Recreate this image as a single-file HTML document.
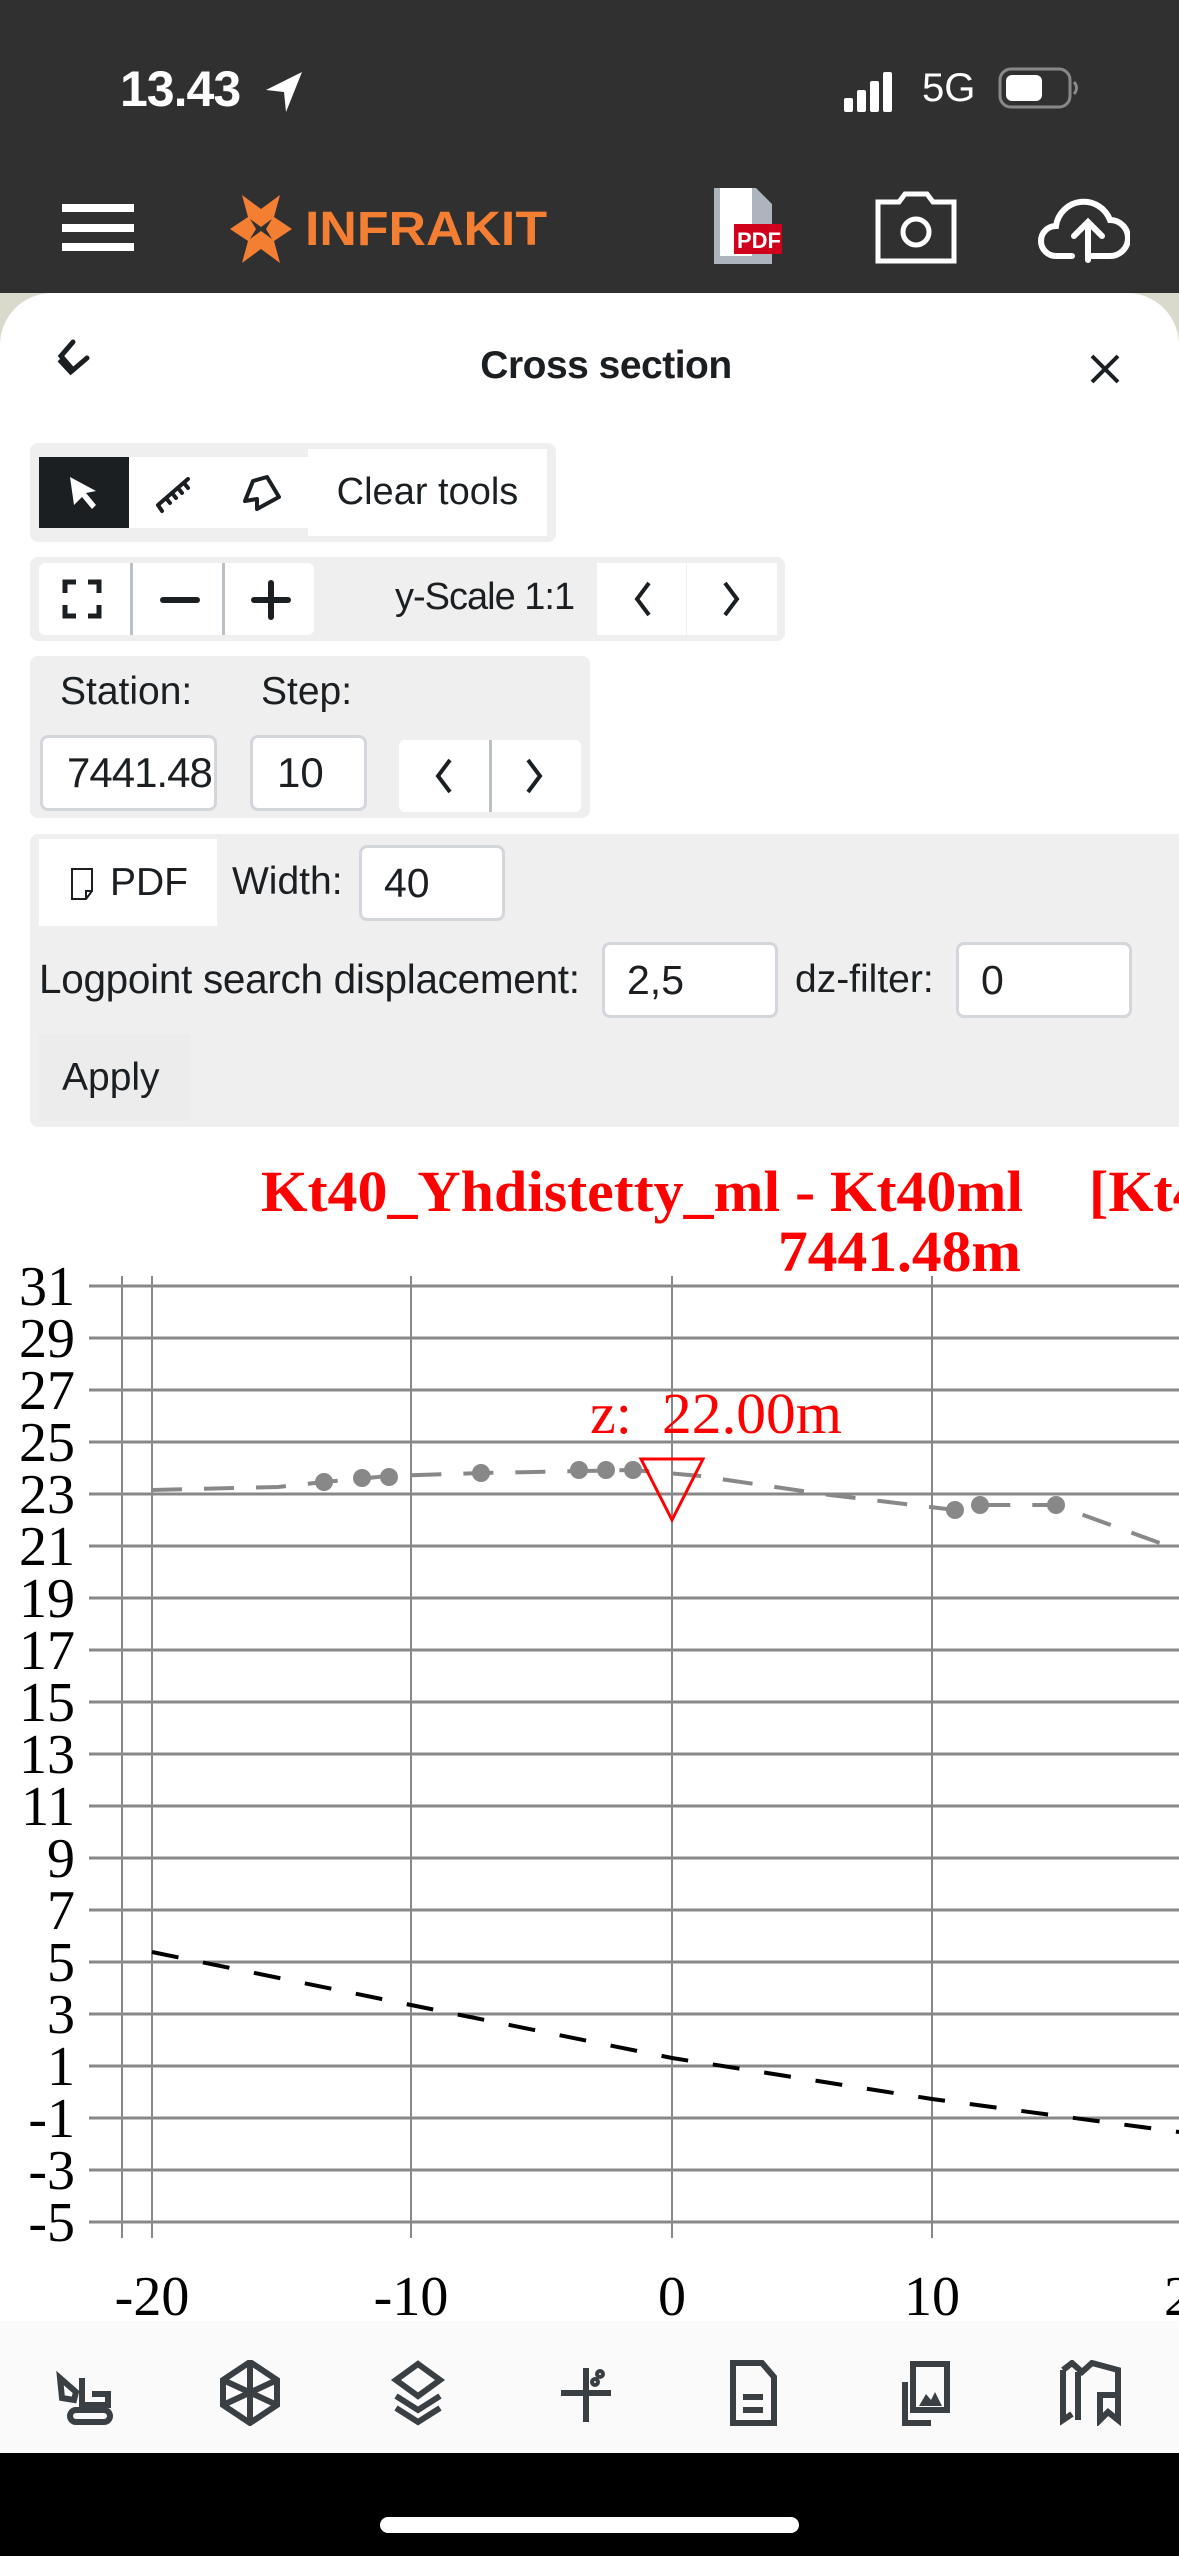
<!DOCTYPE html>
<html><head><meta charset="utf-8">
<style>
*{margin:0;padding:0;box-sizing:border-box}
html,body{width:1179px;height:2556px;overflow:hidden;background:#fff;font-family:"Liberation Sans",sans-serif;color:#1b1f22}
.a{position:absolute}
.grp{position:absolute;background:#efefef;border-radius:8px}
.btn{position:absolute;background:#fff;display:flex;align-items:center;justify-content:center}
.inp{position:absolute;background:#fff;border:3px solid #d3d6da;border-radius:8px;font-size:39px;padding-left:22px;display:flex;align-items:center;overflow:hidden;white-space:nowrap}
.t{position:absolute;font-size:38px;white-space:nowrap}
</style></head><body>
<!-- header -->
<div class="a" style="left:0;top:0;width:1179px;height:293px;background:#303030"></div>
<div class="t" style="left:120px;top:60px;font-size:50px;color:#fff;font-weight:bold;letter-spacing:-1px">13.43</div>
<svg class="a" style="left:262px;top:68px" width="44" height="46" viewBox="0 0 44 46"><path d="M40 4 L4 22 L22 24 L24 44 Z" fill="#fff"/></svg>
<svg class="a" style="left:844px;top:70px" width="60" height="42"><rect x="0" y="28" width="9" height="14" rx="2" fill="#fff"/><rect x="13" y="20" width="9" height="22" rx="2" fill="#fff"/><rect x="26" y="11" width="9" height="31" rx="2" fill="#fff"/><rect x="39" y="2" width="9" height="40" rx="2" fill="#fff"/></svg>
<div class="t" style="left:922px;top:66px;font-size:40px;color:#fff">5G</div>
<svg class="a" style="left:998px;top:66px" width="82" height="46"><rect x="2" y="3" width="70" height="38" rx="11" fill="none" stroke="#888" stroke-width="3"/><rect x="8" y="9" width="36" height="26" rx="6" fill="#fff"/><path d="M76 16 q5 6 0 12" stroke="#888" stroke-width="3" fill="none"/></svg>
<div class="a" style="left:62px;top:204px;width:72px;height:8px;background:#fff"></div>
<div class="a" style="left:62px;top:224px;width:72px;height:8px;background:#fff"></div>
<div class="a" style="left:62px;top:243px;width:72px;height:8px;background:#fff"></div>
<svg class="a" style="left:228px;top:195px" width="66" height="68" viewBox="0 0 66 68"><path d="M14 0 L33 14 L52 0 L46 22 L64 34 L46 46 L52 68 L33 54 L14 68 L20 46 L2 34 L20 22 Z" fill="#f47f33"/><path d="M22 24 L33 32 L44 24 L38 34 L44 44 L33 36 L22 44 L28 34 Z" fill="#303030"/></svg>
<svg class="a" style="left:305px;top:205px" width="245" height="45"><text x="0" y="40" font-family="Liberation Sans" font-weight="bold" font-size="48" fill="#f47f33" textLength="242" lengthAdjust="spacingAndGlyphs">INFRAKIT</text></svg>
<svg class="a" style="left:712px;top:186px" width="72" height="80"><path d="M2 2 H44 L60 18 V78 H2 Z" fill="#aeb4bd"/><path d="M8 2 H40 V70 H8 Z" fill="#fff"/><rect x="22" y="38" width="48" height="30" fill="#d0021b"/><text x="25" y="62" font-family="Liberation Sans" font-weight="bold" font-size="22" fill="#fff">PDF</text></svg>
<svg class="a" style="left:875px;top:190px" width="82" height="75" viewBox="0 0 82 75"><path d="M3 12 H24 L30 4 H52 L58 12 H79 V71 H3 Z" fill="none" stroke="#fff" stroke-width="5"/><circle cx="41" cy="42" r="13" fill="none" stroke="#fff" stroke-width="5"/></svg>
<svg class="a" style="left:1038px;top:194px" width="92" height="70" viewBox="0 0 92 70"><path d="M34 62 H18 A15 15 0 0 1 18 32 A28 28 0 0 1 72 26 A18 18 0 0 1 72 62 H50" fill="none" stroke="#fff" stroke-width="6" stroke-linecap="round"/><path d="M50 66 V30 M36 42 L50 28 L64 42" fill="none" stroke="#fff" stroke-width="6" stroke-linecap="round"/></svg>
<!-- map corners -->
<div class="a" style="left:0;top:293px;width:1179px;height:60px;background:#d9dacb"></div>
<div class="a" style="left:0;top:293px;width:1179px;height:2030px;background:#fff;border-radius:52px 52px 0 0"></div>
<svg class="a" style="left:55px;top:338px" width="42" height="44" viewBox="0 0 42 44"><path d="M18 4 L6 18 L18 32 L32 20" fill="none" stroke="#1b1f22" stroke-width="5" stroke-linecap="round"/><path d="M4 22 L17 36" stroke="#1b1f22" stroke-width="4"/></svg>
<div class="t" style="left:0;width:1212px;text-align:center;top:344px;font-size:39px;font-weight:bold;letter-spacing:-0.5px">Cross section</div>
<svg class="a" style="left:1088px;top:352px" width="34" height="34"><path d="M4 4 L30 30 M30 4 L4 30" stroke="#1b1f22" stroke-width="4"/></svg>
<!-- toolbar 1 -->
<div class="grp" style="left:30px;top:443px;width:526px;height:99px"></div>
<div class="btn" style="left:39px;top:457px;width:90px;height:71px;background:#1b1f22"><svg width="40" height="40" viewBox="0 0 40 40"><path d="M6 4 L32 18 L22 20 L32 32 L28 36 L18 24 L10 32 Z" fill="#fff"/></svg></div>
<div class="btn" style="left:129px;top:457px;width:89px;height:71px"><svg width="44" height="44" viewBox="0 0 44 44"><path d="M6 34 L36 8 M6 34 L10 40 M14 27 L18 32 M20 22 L24 27 M26 17 L30 22 M32 12 L36 17" stroke="#1b1f22" stroke-width="4" stroke-linecap="round" fill="none"/></svg></div>
<div class="btn" style="left:218px;top:457px;width:90px;height:71px"><svg width="44" height="44" viewBox="0 0 44 44"><path d="M12 10 L26 6 L38 26 L16 38 L16 28 L4 30 Z" fill="none" stroke="#1b1f22" stroke-width="4" stroke-linejoin="round"/></svg></div>
<div class="btn" style="left:308px;top:449px;width:239px;height:87px;font-size:38px">Clear tools</div>
<!-- toolbar 2 -->
<div class="grp" style="left:30px;top:557px;width:755px;height:84px"></div>
<div class="btn" style="left:39px;top:563px;width:275px;height:72px;border-radius:6px"></div>
<div class="a" style="left:130px;top:563px;width:3px;height:72px;background:#b9c0c6"></div>
<div class="a" style="left:222px;top:563px;width:3px;height:72px;background:#b9c0c6"></div>
<svg class="a" style="left:62px;top:579px" width="40" height="40"><path d="M3 14 V3 H14 M26 3 H37 V14 M37 26 V37 H26 M14 37 H3 V26" fill="none" stroke="#1b1f22" stroke-width="5"/></svg>
<div class="a" style="left:160px;top:597px;width:40px;height:6px;background:#1b1f22;border-radius:3px"></div>
<div class="a" style="left:251px;top:597px;width:40px;height:6px;background:#1b1f22;border-radius:3px"></div>
<div class="a" style="left:268px;top:580px;width:6px;height:40px;background:#1b1f22;border-radius:3px"></div>
<div class="t" style="left:395px;top:576px;letter-spacing:-1px">y-Scale 1:1</div>
<div class="btn" style="left:597px;top:563px;width:89px;height:72px"><svg width="30" height="40"><path d="M22 4 L10 20 L22 36" fill="none" stroke="#1b1f22" stroke-width="4"/></svg></div>
<div class="btn" style="left:687px;top:563px;width:90px;height:72px"><svg width="30" height="40"><path d="M8 4 L20 20 L8 36" fill="none" stroke="#1b1f22" stroke-width="4"/></svg></div>
<!-- station -->
<div class="grp" style="left:30px;top:656px;width:560px;height:162px"></div>
<div class="t" style="left:60px;top:670px;font-size:39px">Station:</div>
<div class="t" style="left:261px;top:670px;font-size:39px">Step:</div>
<div class="inp" style="left:40px;top:735px;width:177px;height:76px;padding-left:24px;font-size:42px;letter-spacing:-1px">7441.48</div>
<div class="inp" style="left:250px;top:735px;width:117px;height:76px;padding-left:24px;font-size:42px">10</div>
<div class="btn" style="left:399px;top:740px;width:182px;height:72px;border-radius:6px"></div>
<div class="a" style="left:489px;top:740px;width:3px;height:72px;background:#b9c0c6"></div>
<svg class="a" style="left:428px;top:756px" width="30" height="40"><path d="M22 4 L10 20 L22 36" fill="none" stroke="#1b1f22" stroke-width="4"/></svg>
<svg class="a" style="left:520px;top:756px" width="30" height="40"><path d="M8 4 L20 20 L8 36" fill="none" stroke="#1b1f22" stroke-width="4"/></svg>
<!-- pdf row -->
<div class="a" style="left:30px;top:834px;width:1149px;height:293px;background:#efefef;border-radius:8px 0 0 8px"></div>
<div class="btn" style="left:39px;top:839px;width:178px;height:87px;font-size:39px"><svg width="30" height="40" style="margin-right:12px"><path d="M4 6 H24 V28 L18 36 H4 Z M18 36 V28 H24" fill="none" stroke="#1b1f22" stroke-width="2"/></svg>PDF</div>
<div class="t" style="left:232px;top:860px;font-size:39px">Width:</div>
<div class="inp" style="left:359px;top:845px;width:146px;height:76px;font-size:41px">40</div>
<div class="t" style="left:39px;top:956px;font-size:40.5px;letter-spacing:-0.3px">Logpoint search displacement:</div>
<div class="inp" style="left:602px;top:942px;width:176px;height:76px;font-size:41px">2,5</div>
<div class="t" style="left:795px;top:958px;font-size:39px">dz-filter:</div>
<div class="inp" style="left:956px;top:942px;width:176px;height:76px;font-size:41px">0</div>
<div class="btn" style="left:39px;top:1034px;width:151px;height:87px;background:#ececec;font-size:39px;justify-content:flex-start;padding-left:23px">Apply</div>
<!-- chart -->
<svg class="a" style="left:0;top:1140px" width="1179" height="1181" viewBox="0 1140 1179 1181">
<g font-family="Liberation Serif" fill="#f00" font-weight="bold">
<text x="261" y="1211" font-size="58" textLength="762" lengthAdjust="spacingAndGlyphs">Kt40_Yhdistetty_ml - Kt40ml</text>
<text x="1089" y="1211" font-size="58">[Kt40</text>
<text x="778" y="1271" font-size="58" textLength="243" lengthAdjust="spacingAndGlyphs">7441.48m</text>
</g>
<g stroke="#888" stroke-width="3">
<line x1="89" y1="1286" x2="1179" y2="1286"/><line x1="89" y1="1338" x2="1179" y2="1338"/><line x1="89" y1="1390" x2="1179" y2="1390"/><line x1="89" y1="1442" x2="1179" y2="1442"/><line x1="89" y1="1494" x2="1179" y2="1494"/><line x1="89" y1="1546" x2="1179" y2="1546"/><line x1="89" y1="1598" x2="1179" y2="1598"/><line x1="89" y1="1650" x2="1179" y2="1650"/><line x1="89" y1="1702" x2="1179" y2="1702"/><line x1="89" y1="1754" x2="1179" y2="1754"/><line x1="89" y1="1806" x2="1179" y2="1806"/><line x1="89" y1="1858" x2="1179" y2="1858"/><line x1="89" y1="1910" x2="1179" y2="1910"/><line x1="89" y1="1962" x2="1179" y2="1962"/><line x1="89" y1="2014" x2="1179" y2="2014"/><line x1="89" y1="2066" x2="1179" y2="2066"/><line x1="89" y1="2118" x2="1179" y2="2118"/><line x1="89" y1="2170" x2="1179" y2="2170"/><line x1="89" y1="2222" x2="1179" y2="2222"/>
</g>
<g stroke="#888" stroke-width="2">
<line x1="122" y1="1276" x2="122" y2="2238"/><line x1="152" y1="1276" x2="152" y2="2238"/><line x1="411" y1="1276" x2="411" y2="2238"/><line x1="672" y1="1276" x2="672" y2="2238"/><line x1="932" y1="1276" x2="932" y2="2238"/>
</g>
<g font-family="Liberation Serif" font-size="56" text-anchor="end" fill="#000">
<text x="75" y="1305">31</text><text x="75" y="1357">29</text><text x="75" y="1409">27</text><text x="75" y="1461">25</text><text x="75" y="1513">23</text><text x="75" y="1565">21</text><text x="75" y="1617">19</text><text x="75" y="1669">17</text><text x="75" y="1721">15</text><text x="75" y="1773">13</text><text x="75" y="1825">11</text><text x="75" y="1877">9</text><text x="75" y="1929">7</text><text x="75" y="1981">5</text><text x="75" y="2033">3</text><text x="75" y="2085">1</text><text x="75" y="2137">-1</text><text x="75" y="2189">-3</text><text x="75" y="2241">-5</text>
</g>
<polyline points="152,1490 278,1487 324,1482 389,1476 481,1473 633,1470 700,1476 830,1495 955,1510 980,1505 1056,1505 1179,1550" fill="none" stroke="#888" stroke-width="4" stroke-dasharray="30,22"/>
<g fill="#888"><circle cx="324" cy="1482" r="9"/><circle cx="362" cy="1478" r="9"/><circle cx="389" cy="1477" r="9"/><circle cx="481" cy="1473" r="9"/><circle cx="579" cy="1470" r="9"/><circle cx="606" cy="1470" r="9"/><circle cx="633" cy="1470" r="9"/><circle cx="955" cy="1510" r="9"/><circle cx="980" cy="1505" r="9"/><circle cx="1056" cy="1505" r="9"/></g>
<polyline points="152,1952 411,2005 672,2058 932,2099 1179,2132" fill="none" stroke="#000" stroke-width="4" stroke-dasharray="27,25"/>
<path d="M641 1459 H703 L672 1520 Z" fill="none" stroke="#f00" stroke-width="3"/>
<text x="590" y="1433" font-family="Liberation Serif" font-size="58" fill="#f00">z:</text>
<text x="662" y="1433" font-family="Liberation Serif" font-size="58" fill="#f00" textLength="180" lengthAdjust="spacingAndGlyphs">22.00m</text>
<g font-family="Liberation Serif" font-size="56" text-anchor="middle" fill="#000">
<text x="152" y="2315">-20</text><text x="411" y="2315">-10</text><text x="672" y="2315">0</text><text x="932" y="2315">10</text><text x="1192" y="2315">20</text>
</g>
</svg>
<!-- bottom nav -->
<div class="a" style="left:0;top:2321px;width:1179px;height:132px;background:#fafafa"></div>
<svg class="a" style="left:0;top:2360px" width="1179" height="66" viewBox="0 2360 1179 66">
<g fill="none" stroke="#3a3f44" stroke-width="6">
<path d="M60 2378 L76 2392 L74 2400 L62 2398 Z M82 2378 V2405 H108 V2394 H92"/><rect x="70" y="2410" width="40" height="12" rx="6"/>
<path d="M250 2362 L277 2380 V2405 L250 2423 L223 2405 V2380 Z M250 2362 V2423 M223 2380 L277 2405 M277 2380 L223 2405"/>
<path d="M418 2364 L440 2380 L418 2396 L396 2380 Z M396 2396 L418 2410 L440 2396 M396 2408 L418 2422 L440 2408"/>
<path d="M586 2368 V2422 M561 2393 H611"/><circle cx="595" cy="2382" r="2"/><circle cx="600" cy="2374" r="2"/>
<path d="M733 2363 H762 L774 2377 V2423 H733 Z M743 2397 H763 M743 2410 H763"/>
<path d="M905 2382 V2423 H931 M913 2364 H947 V2410 H913 Z"/>
<path d="M1063 2370 L1072 2363 L1082 2372 L1092 2363 L1118 2370 V2420 L1108 2412 L1100 2420 V2395 H1116 M1063 2370 V2420 L1072 2414 M1078 2372 V2420"/>
</g>
<path d="M919 2406 L926 2394 L931 2400 L935 2392 L942 2406 Z" fill="#3a3f44"/>
</svg>
<div class="a" style="left:0;top:2453px;width:1179px;height:103px;background:#000"></div>
<div class="a" style="left:380px;top:2517px;width:419px;height:16px;background:#fff;border-radius:8px"></div>
</body></html>
